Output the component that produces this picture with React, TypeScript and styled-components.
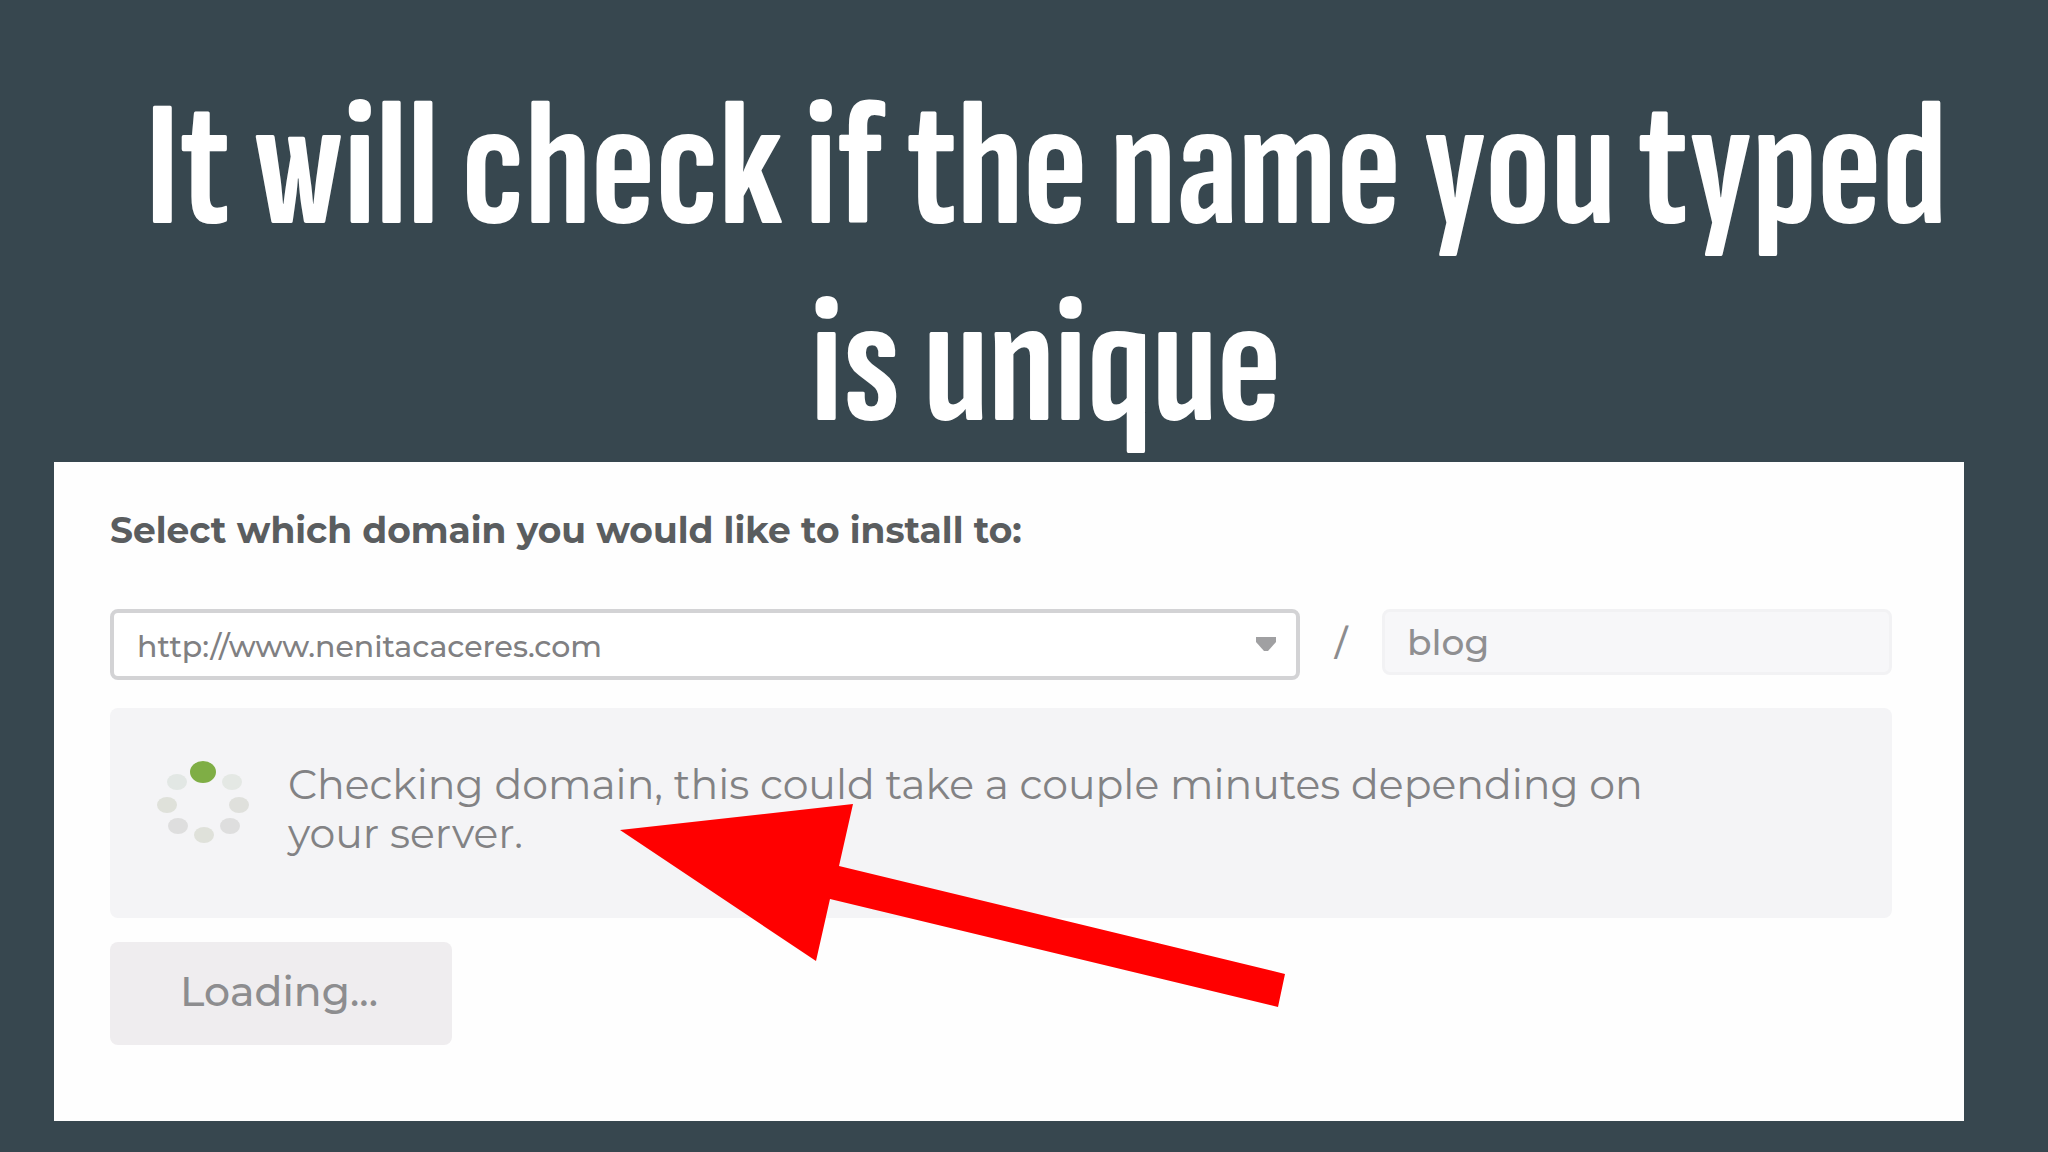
import React from 'react';
import styled, { createGlobalStyle } from 'styled-components';

const GlobalStyle = createGlobalStyle`
  *, *::before, *::after { box-sizing: border-box; }
  html, body { margin: 0; background: #37474f; }
  body { font-family: Montserrat, "Open Sans", "Liberation Sans", sans-serif; }
`;

const Slide = styled.main`
  min-height: 100vh;
  padding: 71px 84px 30px 54px;
  background: #37474f;
`;

const Title = styled.h1`
  margin: 0 0 -3px;
  padding-left: 74px;
  color: #fff;
  font-family: "Sofia Sans Extra Condensed", Antonio, Oswald, "Liberation Sans Narrow", sans-serif;
  font-size: 179px;
  font-weight: 700;
  line-height: 197px;
  text-align: center;
`;

const Panel = styled.form`
  position: relative;
  padding: 40px 72px 76px 56px;
  background: #fefefe;
`;

const PanelLabel = styled.label`
  display: block;
  margin-bottom: 51px;
  color: #5a5d5f;
  font-size: 36px;
  font-weight: 700;
  line-height: 56px;
`;

const FieldRow = styled.div`
  display: grid;
  grid-template-columns: 7fr 82px 3fr;
  align-items: start;
  margin-bottom: 28px;
`;

const SelectWrap = styled.div`
  position: relative;
`;

const DomainSelect = styled.select`
  display: block;
  width: 100%;
  height: 71px;
  padding: 4px 48px 0 23px;
  border: 4px solid #d3d3d5;
  border-radius: 8px;
  appearance: none;
  background: #fff;
  color: #808082;
  font: 500 30px Montserrat, "Open Sans", sans-serif;
`;

const Caret = styled.svg`
  position: absolute;
  top: 28px;
  right: 24px;
  width: 20px;
  height: 14px;
  pointer-events: none;
`;

const Slash = styled.span`
  color: #8c8c8e;
  font-size: 36px;
  font-weight: 500;
  line-height: 66px;
  text-align: center;
`;

const PathInput = styled.input`
  width: 100%;
  height: 66px;
  padding: 0 22px;
  border: 3px solid #f2f2f4;
  border-radius: 8px;
  background: #f7f7f9;
  color: #8f8f91;
  font: 500 36px Montserrat, "Open Sans", sans-serif;
`;

const Notice = styled.div`
  display: flex;
  align-items: flex-start;
  gap: 36px;
  min-height: 210px;
  margin-bottom: 24px;
  padding: 52px 200px 52px 42px;
  border-radius: 8px;
  background: #f4f4f6;
`;

const Spinner = styled.svg`
  flex: none;
  width: 100px;
  height: 90px;
`;

const NoticeText = styled.p`
  margin: 0;
  color: #828284;
  font-size: 41px;
  font-weight: 400;
  line-height: 49px;
`;

const LoadingButton = styled.button`
  display: block;
  height: 103px;
  padding: 0 74px 6px 70px;
  border: 0;
  border-radius: 8px;
  background: #efedef;
  color: #8d8d8f;
  font: 500 41px Montserrat, "Open Sans", sans-serif;
`;

const Arrow = styled.svg`
  position: absolute;
  top: 342px;
  left: 566px;
  width: 665px;
  height: 203px;
  pointer-events: none;
`;

const dots = [
  { x: 51, y: 12, color: '#7fae45' },
  { x: 80, y: 22, color: '#e4e8e4' },
  { x: 87, y: 45, color: '#dfe0dc' },
  { x: 78, y: 66, color: '#dedede' },
  { x: 52, y: 75, color: '#dfe1da' },
  { x: 26, y: 66, color: '#dedede' },
  { x: 15, y: 45, color: '#dfe1da' },
  { x: 25, y: 22, color: '#e2e7e4' },
];

export default function App() {
  return (
    <>
      <GlobalStyle />
      <Slide>
        <Title>It will check if the name you typed is unique</Title>
        <Panel onSubmit={(event) => event.preventDefault()}>
          <PanelLabel htmlFor="domain">Select which domain you would like to install to:</PanelLabel>
          <FieldRow>
            <SelectWrap>
              <DomainSelect id="domain">
                <option>http://www.nenitacaceres.com</option>
              </DomainSelect>
              <Caret viewBox="0 0 20 14" aria-hidden="true">
                <path d="M0 0H20V5L12 14H8L0 5Z" fill="#a0a0a2" />
              </Caret>
            </SelectWrap>
            <Slash>/</Slash>
            <PathInput aria-label="Directory" defaultValue="blog" />
          </FieldRow>
          <Notice role="status">
            <Spinner viewBox="0 0 100 90" aria-hidden="true">
              {dots.map((dot, index) => (
                <ellipse key={index} cx={dot.x} cy={dot.y} rx={index ? 10 : 13} ry={index ? 8 : 11} fill={dot.color} />
              ))}
            </Spinner>
            <NoticeText>Checking domain, this could take a couple minutes depending on your server.</NoticeText>
          </Notice>
          <LoadingButton type="submit">Loading...</LoadingButton>
          <Arrow viewBox="0 0 665 203" aria-hidden="true">
            <path d="M0 26L233 0L219 62L665 170L658 203L210 95L196 157Z" fill="#ff0000" />
          </Arrow>
        </Panel>
      </Slide>
    </>
  );
}
